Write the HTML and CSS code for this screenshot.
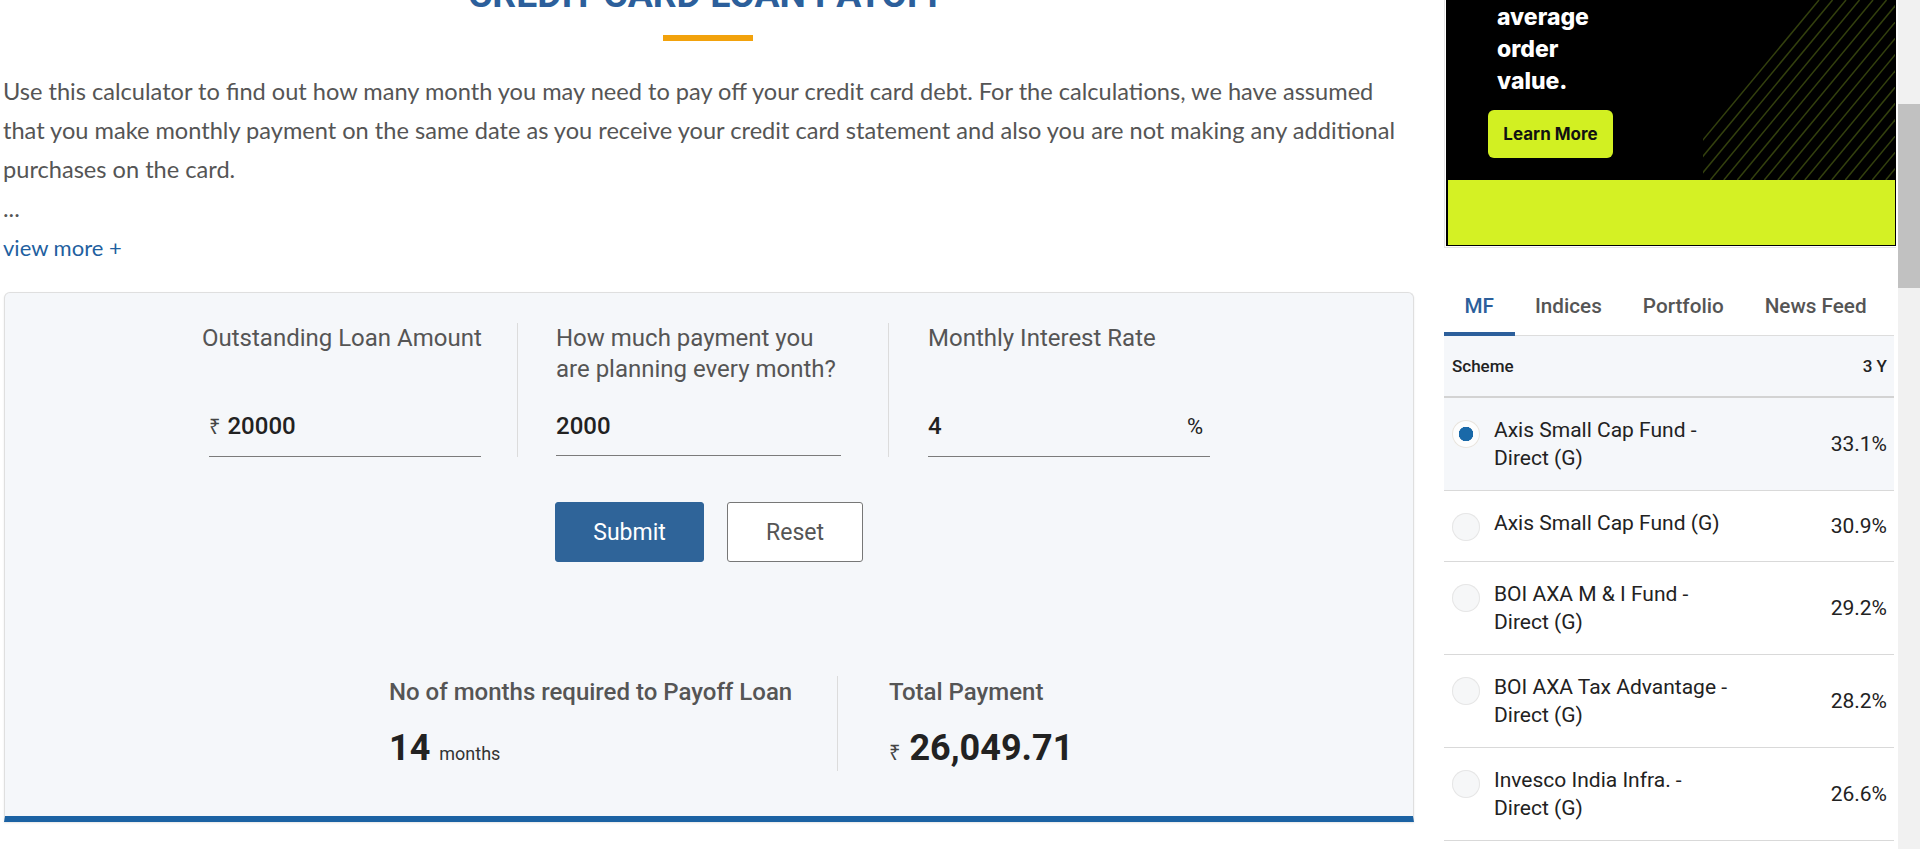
FILE: index.html
```html
<!DOCTYPE html>
<html lang="en">
<head>
<meta charset="utf-8">
<title>Credit Card Loan Payoff</title>
<link rel="stylesheet" href="styles.css">
</head>
<body>
<div class="page">
  <main class="main">
    <h1 class="title">CREDIT CARD LOAN PAYOFF</h1>
    <div class="title-bar"></div>
    <div class="intro">
      <p class="intro-text">Use this calculator to find out how many month you may need to pay off your credit card debt. For the calculations, we have assumed that you make monthly payment on the same date as you receive your credit card statement and also you are not making any additional purchases on the card.</p>
      <p class="intro-text">...</p>
      <a class="view-more" href="#">view more +</a>
    </div>

    <section class="calc">
      <div class="fields">
        <div class="field f1">
          <div class="field-label nowrap">Outstanding Loan Amount</div>
          <div class="field-input in1"><span class="rupee">₹</span><span class="val">20000</span></div>
        </div>
        <div class="field f2">
          <div class="field-label">How much payment you are planning every month?</div>
          <div class="field-input"><span class="val">2000</span></div>
        </div>
        <div class="field f3">
          <div class="field-label">Monthly Interest Rate</div>
          <div class="field-input in3"><span class="val">4</span><span class="pct">%</span></div>
        </div>
      </div>

      <div class="actions">
        <button class="btn btn-submit" type="button">Submit</button>
        <button class="btn btn-reset" type="button">Reset</button>
      </div>

      <div class="results">
        <div class="res r1">
          <div class="res-label">No of months required to Payoff Loan</div>
          <div class="res-value"><span class="big">14</span> <span class="unit">months</span></div>
        </div>
        <div class="res r2">
          <div class="res-label">Total Payment</div>
          <div class="res-value"><span class="rupee-s">₹</span> <span class="big">26,049.71</span></div>
        </div>
      </div>
    </section>
  </main>

  <aside class="side">
    <div class="ad-frame">
      <div class="ad">
        <div class="ad-top">
          <svg class="ad-lines" width="192" height="180" viewBox="0 0 192 180" aria-hidden="true">
            <g stroke="#33400e" stroke-width="1.5">
              <line x1="116" y1="0" x2="-33.2" y2="180"/>
              <line x1="129.5" y1="0" x2="-19.7" y2="180"/>
              <line x1="143" y1="0" x2="-6.2" y2="180"/>
              <line x1="156.5" y1="0" x2="7.3" y2="180"/>
              <line x1="170" y1="0" x2="20.8" y2="180"/>
              <line x1="183.5" y1="0" x2="34.3" y2="180"/>
              <line x1="197" y1="0" x2="47.8" y2="180"/>
              <line x1="210.5" y1="0" x2="61.3" y2="180"/>
              <line x1="224" y1="0" x2="74.8" y2="180"/>
              <line x1="237.5" y1="0" x2="88.3" y2="180"/>
              <line x1="251" y1="0" x2="101.8" y2="180"/>
              <line x1="264.5" y1="0" x2="115.3" y2="180"/>
              <line x1="278" y1="0" x2="128.8" y2="180"/>
              <line x1="291.5" y1="0" x2="142.3" y2="180"/>
              <line x1="305" y1="0" x2="155.8" y2="180"/>
              <line x1="318.5" y1="0" x2="169.3" y2="180"/>
              <line x1="332" y1="0" x2="182.8" y2="180"/>
            </g>
          </svg>
          <div class="ad-text">average<br>order<br>value.</div>
          <div class="ad-btn">Learn More</div>
        </div>
        <div class="ad-bottom"></div>
      </div>
    </div>

    <div class="tabs">
      <div class="tab active">MF</div>
      <div class="tab">Indices</div>
      <div class="tab">Portfolio</div>
      <div class="tab">News Feed</div>
    </div>

    <div class="mf-head"><span>Scheme</span><span>3 Y</span></div>

    <div class="mf-row selected">
      <span class="radio on"></span>
      <span class="mf-name">Axis Small Cap Fund - Direct (G)</span>
      <span class="mf-pct">33.1%</span>
    </div>
    <div class="mf-row">
      <span class="radio"></span>
      <span class="mf-name">Axis Small Cap Fund (G)</span>
      <span class="mf-pct">30.9%</span>
    </div>
    <div class="mf-row">
      <span class="radio"></span>
      <span class="mf-name">BOI AXA M &amp; I Fund - Direct (G)</span>
      <span class="mf-pct">29.2%</span>
    </div>
    <div class="mf-row">
      <span class="radio"></span>
      <span class="mf-name">BOI AXA Tax Advantage - Direct (G)</span>
      <span class="mf-pct">28.2%</span>
    </div>
    <div class="mf-row">
      <span class="radio"></span>
      <span class="mf-name">Invesco India Infra. - Direct (G)</span>
      <span class="mf-pct">26.6%</span>
    </div>
  </aside>

  <div class="scrollbar"><div class="thumb"></div></div>
</div>
</body>
</html>
```

FILE: styles.css
```css
* { box-sizing: border-box; }

html, body {
  margin: 0;
  padding: 0;
  background: #fff;
}

body {
  font-family: Roboto, "Liberation Sans", Arial, sans-serif;
  color: #222;
  overflow: hidden;
}

.page {
  display: flex;
  width: 1920px;
  height: 849px;
  overflow: hidden;
}

/* ---------- main column ---------- */
.main {
  flex: none;
  width: 1414px;
  padding-left: 2px;
}

.title {
  margin: -26px 0 0;
  height: 41px;
  font: 700 37.3px/41px Roboto, "Liberation Sans", sans-serif;
  color: #2c5f9b;
  text-align: center;
  white-space: nowrap;
}

.title-bar {
  width: 90px;
  height: 6px;
  margin: 20px auto 0;
  background: #f2a20c;
}

.intro {
  margin-top: 31px;
  padding-left: 1px;
  font: 400 22px/39px Lato, "Liberation Sans", sans-serif;
  color: #555;
}

.intro-text {
  margin: 0;
  font-size: 23.6px;
}

.view-more {
  display: block;
  color: #1f5fa0;
  text-decoration: none;
}

/* ---------- calculator card ---------- */
.calc {
  width: 1410px;
  margin: 25px 0 0 2px;
  padding: 30px 0 45px;
  background: #f5f7fa;
  border: 1px solid #dfdfdf;
  border-bottom: 6px solid #1b62a3;
  border-radius: 6px 6px 0 0;
  box-shadow: 0 1px 2px rgba(0, 0, 0, 0.1);
}

.fields {
  display: flex;
  padding-left: 197px;
}

.field {
  flex: none;
  display: flex;
  flex-direction: column;
}

.f1 {
  width: 316px;
  padding-right: 36px;
  border-right: 1px solid #dcdcdc;
}

.f2 {
  width: 371px;
  padding: 0 47px 0 38px;
  border-right: 1px solid #dcdcdc;
}

.f3 {
  width: 321px;
  padding-left: 39px;
}

.field-label {
  min-height: 62px;
  font: 400 24px/31px Roboto, "Liberation Sans", sans-serif;
  color: #555;
}

.nowrap { white-space: nowrap; }

.field-input {
  display: flex;
  align-items: baseline;
  margin-top: 26px;
  padding-bottom: 14px;
  border-bottom: 1px solid #7b7b7b;
  font: 500 24px/30px Roboto, "Liberation Sans", sans-serif;
  color: #222;
}

.in1 { margin-left: 7px; }

.rupee {
  margin-right: 7px;
  font: 400 20px/30px "Noto Sans", "DejaVu Sans", sans-serif;
  color: #444;
}

.in3 { justify-content: space-between; }

.pct {
  padding-right: 7px;
  font: 400 22px/30px Roboto, "Liberation Sans", sans-serif;
  color: #222;
}

.actions {
  display: flex;
  justify-content: center;
  gap: 23px;
  margin-top: 45px;
}

.btn {
  height: 60px;
  border-radius: 3px;
  font: 400 23px/1 Roboto, "Liberation Sans", sans-serif;
  cursor: pointer;
}

.btn-submit {
  width: 149px;
  background: #2f6499;
  border: 1px solid #2f6499;
  color: #fff;
}

.btn-reset {
  width: 136px;
  background: #fff;
  border: 1px solid #777;
  color: #555;
}

.results {
  display: flex;
  margin-top: 114px;
  padding-left: 384px;
}

.res { flex: none; }

.r1 {
  width: 449px;
  border-right: 1px solid #dcdcdc;
}

.r2 { padding-left: 51px; }

.res-label {
  font: 500 24px/32px Roboto, "Liberation Sans", sans-serif;
  color: #555;
  white-space: nowrap;
}

.res-value {
  margin-top: 18px;
  font: 700 36px/45px Roboto, "Liberation Sans", sans-serif;
  color: #222;
  white-space: nowrap;
}

.unit {
  font: 400 18px Roboto, "Liberation Sans", sans-serif;
  color: #333;
}

.rupee-s {
  font: 400 20px "Noto Sans", "DejaVu Sans", sans-serif;
  color: #444;
}

/* ---------- sidebar ---------- */
.side {
  flex: none;
  width: 452px;
  margin-left: 30px;
}

.ad-frame {
  padding: 0 0 1px 1px;
  border-left: 1px solid #e4e4e4;
  border-bottom: 1px solid #e4e4e4;
}

.ad {
  width: 450px;
  border-left: 2px solid #000;
  border-right: 1px solid #000;
  border-bottom: 1px solid #000;
}

.ad-top {
  position: relative;
  height: 180px;
  padding-left: 40px;
  background: #000;
  overflow: hidden;
}

.ad-lines {
  position: absolute;
  top: 0;
  right: 0;
}

.ad-text {
  position: relative;
  margin-left: 9px;
  padding-top: 1px;
  font: 800 23px/32px Inter, Roboto, sans-serif;
  color: #fff;
}

.ad-btn {
  position: relative;
  width: 125px;
  height: 48px;
  margin-top: 13px;
  border-radius: 6px;
  background: #d2f022;
  font: 700 17px/48px Inter, Roboto, sans-serif;
  color: #111;
  text-align: center;
}

.ad-bottom {
  height: 65px;
  background: #d4f124;
}

.tabs {
  display: flex;
  margin: 26px 2px 0 0;
  border-bottom: 1px solid #dddddd;
}

.tab {
  padding: 20px 20.5px 14px;
  margin-bottom: -1px;
  border-bottom: 4px solid transparent;
  font: 500 20.7px/24px Roboto, "Liberation Sans", sans-serif;
  color: #555;
}

.tab.active {
  color: #2c5f9b;
  border-bottom-color: #2c5f9b;
}

.mf-head {
  display: flex;
  justify-content: space-between;
  align-items: center;
  height: 62px;
  margin-right: 2px;
  padding: 0 7px 0 8px;
  background: #f5f7fa;
  border-bottom: 2px solid #d3d3d3;
  font: 500 17px Roboto, "Liberation Sans", sans-serif;
  color: #222;
}

.mf-row {
  display: flex;
  align-items: flex-start;
  margin-right: 2px;
  padding: 18px 7px 18px 8px;
  border-bottom: 1px solid #d9d9d9;
  font: 400 21px/28px Roboto, "Liberation Sans", sans-serif;
  color: #222;
}

.mf-row.selected { background: #f5f7fa; }

.radio {
  flex: none;
  width: 28px;
  height: 28px;
  margin: 4px 0 2px;
  border-radius: 50%;
  background: #f6f7f8;
  box-shadow: inset 0 0 0 1px #e6e6e6;
}

.radio.on {
  background: radial-gradient(circle, #1a69a8 0 7px, #fdfdfd 7.5px);
  box-shadow: inset 0 0 0 1px #e8e4de;
}

.mf-name {
  width: 245px;
  margin-left: 14px;
}

.mf-pct {
  margin-left: auto;
  align-self: center;
}

/* ---------- page scrollbar ---------- */
.scrollbar {
  flex: none;
  width: 22px;
  height: 849px;
  margin-left: 2px;
  background: #f1f1f1;
}

.thumb {
  height: 184px;
  margin-top: 104px;
  background: #c1c1c1;
}
```
